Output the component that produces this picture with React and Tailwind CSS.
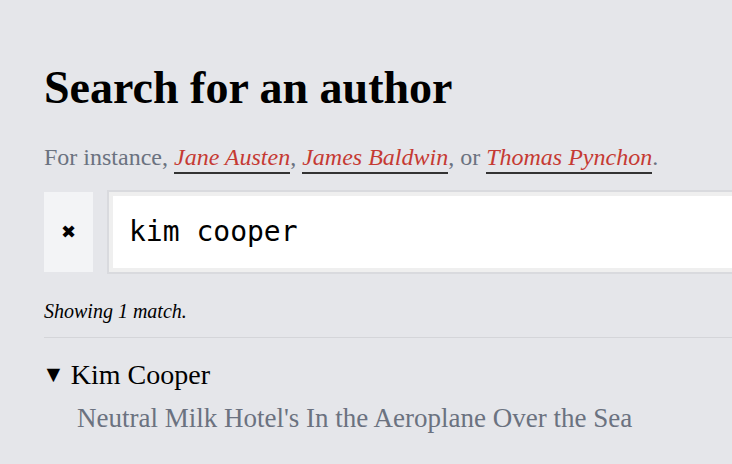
import React from 'react';

const serif = { fontFamily: '"Liberation Serif", "DejaVu Serif", serif' };

function Link({ children }) {
  return (
    <a href="#" className="italic text-[#c53a33] border-b-2 border-[#333333] pb-[2px]">
      {children}
    </a>
  );
}

export default function App() {
  return (
    <div className="min-h-[464px] bg-[#e5e6ea] overflow-hidden" style={serif}>
      <div className="pl-[44px] pt-[64px]">
        <h1 className="text-[46px] leading-[48px] font-bold text-black whitespace-nowrap">Search for an author</h1>

        <p className="mt-[31px] text-[24px] leading-[28px] text-[#6b7280] whitespace-nowrap">
          For instance, <Link>Jane Austen</Link>, <Link>James Baldwin</Link>, or <Link>Thomas Pynchon</Link>.
        </p>

        <div className="mt-[19px] flex items-start gap-[14px] w-[800px]">
          <button className="w-[49px] h-[80px] mt-[2px] bg-[#f3f4f6] flex items-center justify-center text-[18px] text-black">
            ✖
          </button>
          <div className="flex-1 h-[84px] border-2 border-[#d9dade]">
            <div className="h-full border-4 border-[#efefef] bg-white flex items-center pl-[16px]">
              <span className="text-[28px] text-black" style={{ fontFamily: '"DejaVu Sans Mono", monospace' }}>
                kim cooper
              </span>
            </div>
          </div>
        </div>

        <p className="mt-[25px] text-[20px] italic text-black leading-[24px]">Showing 1 match.</p>

        <div className="mt-[14px] border-t border-[#d4d5d9]" />

        <div className="mt-[21px] flex items-center text-[28px] leading-[32px] text-black">
          <span className="text-[23px] mr-[6px] -ml-[2px]">▼</span>
          <span>Kim Cooper</span>
        </div>
        <div className="mt-[11px] pl-[33px] text-[27px] leading-[32px] text-[#6b7280] whitespace-nowrap">
          Neutral Milk Hotel's In the Aeroplane Over the Sea
        </div>
      </div>
    </div>
  );
}
